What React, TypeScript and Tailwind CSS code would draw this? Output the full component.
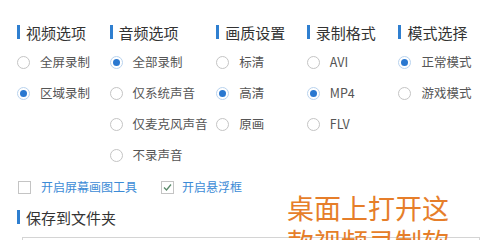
import React from "react";

const font = { fontFamily: '"Microsoft YaHei", "Noto Sans CJK SC", sans-serif' };

function Header({ label }: { label: string }) {
  return (
    <div className="flex items-center h-[22px]">
      <span className="w-[3px] h-[14px] bg-[#2f7fd0] mr-[6px]" />
      <span className="text-[15px] leading-none text-[#333]">{label}</span>
    </div>
  );
}

function Radio({ label, checked }: { label: string; checked?: boolean }) {
  return (
    <div className="flex items-center h-[31px]">
      {checked ? (
        <span className="w-[13px] h-[13px] rounded-full border border-[#b9d3ee] bg-white flex items-center justify-center">
          <span className="w-[7px] h-[7px] rounded-full bg-[#2a78d0]" />
        </span>
      ) : (
        <span className="w-[13px] h-[13px] rounded-full border border-[#c4c4c4] bg-white" />
      )}
      <span className="ml-[10px] text-[12.5px] leading-none text-[#555] whitespace-nowrap">{label}</span>
    </div>
  );
}

function Column({ title, items, checked }: { title: string; items: string[]; checked: number }) {
  return (
    <div className="flex flex-col">
      <Header label={title} />
      <div className="mt-[4px] flex flex-col">
        {items.map((it, i) => (
          <Radio key={it} label={it} checked={i === checked} />
        ))}
      </div>
    </div>
  );
}

export default function App() {
  return (
    <div className="relative w-[490px] h-[240px] bg-white overflow-hidden" style={font}>
      <div className="pl-[17px] pt-[21px] flex">
        <div className="w-[94px]">
          <Column title="视频选项" items={["全屏录制", "区域录制"]} checked={1} />
        </div>
        <div className="w-[104px] -ml-[1px]">
          <Column title="音频选项" items={["全部录制", "仅系统声音", "仅麦克风声音", "不录声音"]} checked={0} />
        </div>
        <div className="w-[91px] ml-[3px]">
          <Column title="画质设置" items={["标清", "高清", "原画"]} checked={1} />
        </div>
        <div className="w-[92px]">
          <Column title="录制格式" items={["AVI", "MP4", "FLV"]} checked={1} />
        </div>
        <div className="w-[92px]">
          <Column title="模式选择" items={["正常模式", "游戏模式"]} checked={0} />
        </div>
      </div>
      <div className="pl-[18px] mt-[6px] flex items-center h-[20px]">
        <span className="w-[13px] h-[13px] border border-[#c4c4c4] bg-white" />
        <span className="ml-[10px] text-[12px] leading-none text-[#3c8bd6]">开启屏幕画图工具</span>
        <span className="ml-[24px] w-[13px] h-[13px] border border-[#c4c4c4] bg-white flex items-center justify-center">
          <svg width="9" height="9" viewBox="0 0 9 9">
            <path d="M1 4.5 L3.5 7 L8 1.5" fill="none" stroke="#5a8a6a" strokeWidth="1.3" />
          </svg>
        </span>
        <span className="ml-[8px] text-[12px] leading-none text-[#3c8bd6]">开启悬浮框</span>
      </div>
      <div className="pl-[17px] mt-[9px]">
        <Header label="保存到文件夹" />
      </div>
      <div className="ml-[22px] mr-[10px] mt-[9px] h-[30px] border border-[#d4d4d4] bg-white" />
      <div className="absolute left-[287px] top-[191px] text-[27px] leading-[34px] text-[#e67e2a] whitespace-nowrap">
        <div>桌面上打开这</div>
        <div>款视频录制软</div>
      </div>
    </div>
  );
}
